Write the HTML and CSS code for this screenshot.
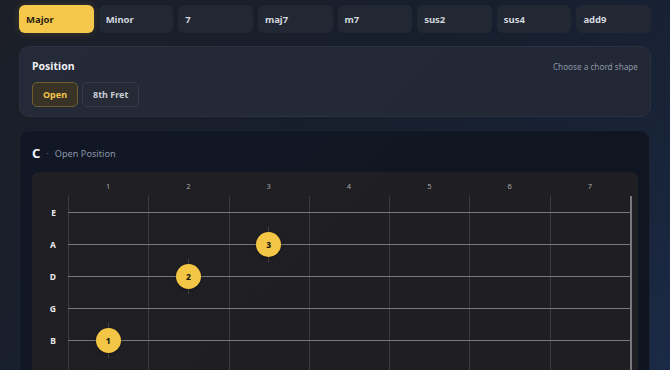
FILE: index.html
```html
<!DOCTYPE html>
<html>
<head>
<meta charset="utf-8">
<link rel="stylesheet" href="styles.css">
</head>
<body>
<div class="app">
  <nav class="tabs">
    <button class="tab active">Major</button>
    <button class="tab">Minor</button>
    <button class="tab">7</button>
    <button class="tab">maj7</button>
    <button class="tab">m7</button>
    <button class="tab">sus2</button>
    <button class="tab">sus4</button>
    <button class="tab">add9</button>
  </nav>

  <section class="panel">
    <div class="panel-head">
      <h2 class="panel-title">Position</h2>
      <span class="panel-hint">Choose a chord shape</span>
    </div>
    <div class="pos-buttons">
      <button class="pos active">Open</button>
      <button class="pos">8th Fret</button>
    </div>
  </section>

  <section class="card">
    <div class="card-head">
      <span class="chord-name">C</span>
      <span class="sep">·</span>
      <span class="chord-pos">Open Position</span>
    </div>
    <div class="fretboard">
      <div class="fret-nums">
        <span></span>
        <span>1</span><span>2</span><span>3</span><span>4</span><span>5</span><span>6</span><span>7</span>
      </div>
      <div class="neck">
        <div class="fret-lines">
          <i style="left:0%"></i>
          <i style="left:14.2857%"></i>
          <i style="left:28.5714%"></i>
          <i style="left:42.8571%"></i>
          <i style="left:57.1429%"></i>
          <i style="left:71.4286%"></i>
          <i style="left:85.7143%"></i>
          <i class="last" style="left:100%"></i>
        </div>
        <div class="string"><span class="label">E</span><span></span><span></span><span></span><span></span><span></span><span></span><span></span></div>
        <div class="string"><span class="label">A</span><span></span><span></span><span class="cell"><b class="dot">3</b></span><span></span><span></span><span></span><span></span></div>
        <div class="string"><span class="label">D</span><span></span><span class="cell"><b class="dot">2</b></span><span></span><span></span><span></span><span></span><span></span></div>
        <div class="string"><span class="label">G</span><span></span><span></span><span></span><span></span><span></span><span></span><span></span></div>
        <div class="string"><span class="label">B</span><span class="cell"><b class="dot">1</b></span><span></span><span></span><span></span><span></span><span></span><span></span></div>
      </div>
    </div>
  </section>
</div>
</body>
</html>
```

FILE: styles.css
```css
* { box-sizing: border-box; }
html, body { margin: 0; height: 100%; }
body {
  font-family: "Noto Sans", "Open Sans", "Liberation Sans", sans-serif;
  background: linear-gradient(135deg, #1c1f28 0%, #171e2c 45%, #182439 80%, #1b2a47 100%);
  color: #e6e8ec;
  overflow: hidden;
}
.app { padding: 5px 19px 0 19px; width: 670px; }

.tabs {
  display: grid;
  grid-template-columns: repeat(8, 1fr);
  gap: 5px;
  width: 632px;
}
.tab {
  height: 28px;
  border: none;
  border-radius: 6px;
  background: #222734;
  color: #d3d6dd;
  font: 700 9.5px "Noto Sans", sans-serif;
  text-align: left;
  padding: 0 7px;
}
.tab.active {
  background: #f5c84c;
  color: #2a220f;
  box-shadow: 0 0 8px rgba(245, 200, 76, 0.18);
}

.panel {
  margin-top: 13px;
  width: 632px;
  height: 71px;
  border: 1px solid #2b3140;
  border-radius: 10px;
  background: linear-gradient(135deg, #242a37 0%, #212735 100%);
  padding: 12px 12px 10px 12px;
}
.panel-head { display: flex; justify-content: space-between; align-items: center; height: 14px; }
.panel-title { margin: 0; font-size: 10.5px; font-weight: 700; color: #eef0f3; line-height: 14px; }
.panel-hint { font-size: 8.2px; color: #8e96a6; }
.pos-buttons { display: flex; gap: 4px; margin-top: 9px; }
.pos {
  height: 25px;
  border-radius: 5px;
  border: 1px solid #343a48;
  background: #252a36;
  color: #c9cdd5;
  font: 700 9px "Noto Sans", sans-serif;
  padding: 0 10px;
}
.pos.active {
  border-color: #6f5f2d;
  background: #383326;
  color: #f2c447;
}

.card {
  margin-top: 13px;
  width: 631px;
  height: 300px;
  border: 1px solid #1c2331;
  border-bottom: none;
  border-radius: 10px 10px 0 0;
  background: linear-gradient(135deg, #111724 0%, #0f1520 100%);
  padding: 13px 11px 0 12px;
}
.card-head { display: flex; align-items: center; height: 18px; gap: 6px; }
.chord-name { font-size: 13px; font-weight: 700; color: #f2f3f5; }
.sep { font-size: 9px; color: #5d6677; }
.chord-pos { font-size: 9.2px; color: #8b95a8; }

.fretboard {
  margin-top: 10px;
  background: linear-gradient(135deg, #201f23 0%, #1e1e23 100%);
  border-radius: 7px 7px 0 0;
  padding: 6px 8px 0 0;
  height: 240px;
}
.fret-nums {
  display: grid;
  grid-template-columns: 36px repeat(7, 1fr);
  height: 16px;
  line-height: 16px;
  margin-bottom: 2px;
  font-size: 7.5px;
  color: #a6a7ac;
  text-align: center;
}
.neck { position: relative; height: 220px; }
.fret-lines { position: absolute; left: 36px; right: 0; top: 0; bottom: 0; }
.fret-lines i {
  position: absolute; top: 0; bottom: 0; width: 1px;
  background: #3b3b42;
}
.fret-lines i.last { background: #78787e; width: 1.5px; }

.string {
  position: relative;
  display: grid;
  grid-template-columns: 36px repeat(7, 1fr);
  height: 32px;
  align-items: center;
}
.string::after {
  content: "";
  position: absolute;
  left: 36px; right: 0; top: 15.5px;
  height: 1px;
  background: #77777e;
}
.label {
  text-align: right;
  padding-right: 12px;
  font-size: 8.5px;
  font-weight: 700;
  color: #e9eaec;
}
.cell { display: flex; justify-content: center; align-items: center; position: relative; z-index: 2; }
.dot {
  position: relative;
  width: 25px; height: 25px;
  border-radius: 50%;
  background: #f4c646;
  color: #221c0c;
  font-size: 8.5px;
  font-weight: 800;
  display: flex; align-items: center; justify-content: center;
  box-shadow: 0 1px 3px rgba(0,0,0,0.35);
}
.dot::before {
  content: "";
  position: absolute;
  left: 12px; top: -5px;
  width: 1px; height: 35px;
  background: rgba(110, 100, 80, 0.45);
  z-index: -1;
}
```
